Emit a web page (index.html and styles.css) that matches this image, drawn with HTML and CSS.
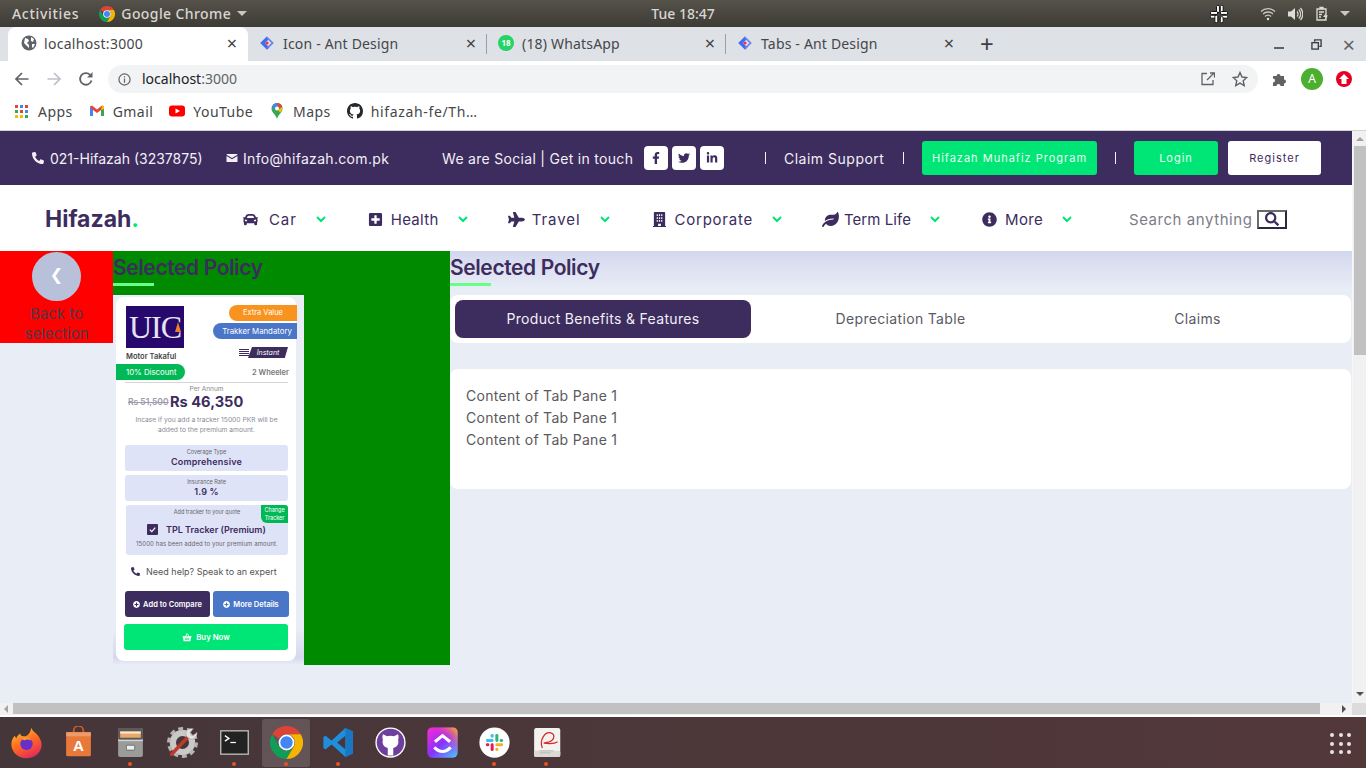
FILE: index.html
```html
<!DOCTYPE html>
<html lang="en">
  <head>
    <meta charset="UTF-8" />
    <meta name="viewport" content="width=device-width, initial-scale=1.0" />
    <title>Hifazah</title>
    <link rel="stylesheet" href="styles.css">
  </head>
  <body>
    <svg class="defs" aria-hidden="true">
      <symbol id="i-phone" viewBox="0 0 512 512"><path transform="matrix(-1 0 0 1 512 0)" d="M493.4 24.6l-104-24c-11.3-2.6-22.9 3.3-27.5 13.9l-48 112c-4.2 9.8-1.4 21.3 6.9 28l60.6 49.6c-36 76.7-98.9 140.5-177.2 177.2l-49.6-60.6c-6.8-8.3-18.2-11.1-28-6.9l-112 48C3.9 366.5-2 378.1.6 389.4l24 104C27.1 504.2 36.7 512 48 512c256.1 0 464-207.5 464-464 0-11.2-7.7-20.9-18.6-23.4z"/></symbol>
      <symbol id="i-mail" viewBox="0 0 24 24"><path d="M2 4h20a1 1 0 0 1 1 1v.6l-11 6.6L1 5.600V5a1 1 0 0 1 1-1zM1 8l11 6.600L23 8v11a1 1 0 0 1-1 1H2a1 1 0 0 1-1-1z"/></symbol>
      <symbol id="i-fb" viewBox="0 0 320 512"><path d="M279.14 288l14.22-92.66h-88.91v-60.13c0-25.35 12.42-50.06 52.24-50.06h40.42V6.26S260.43 0 225.36 0c-73.22 0-121.08 44.38-121.08 124.72v70.62H22.89V288h81.39v224h100.17V288z"/></symbol>
      <symbol id="i-tw" viewBox="0 0 512 512"><path d="M459.37 151.716c.325 4.548.325 9.097.325 13.645 0 138.72-105.583 298.558-298.558 298.558-59.452 0-114.68-17.219-161.137-47.106 8.447.974 16.568 1.299 25.34 1.299 49.055 0 94.213-16.568 130.274-44.832-46.132-.975-84.792-31.188-98.112-72.772 6.498.974 12.995 1.624 19.818 1.624 9.421 0 18.843-1.3 27.614-3.573-48.081-9.747-84.143-51.98-84.143-102.985v-1.299c13.969 7.797 30.214 12.67 47.431 13.319-28.264-18.843-46.781-51.005-46.781-87.391 0-19.492 5.197-37.36 14.294-52.954 51.655 63.675 129.3 105.258 216.365 109.807-1.624-7.797-2.599-15.918-2.599-24.04 0-57.828 46.782-104.934 104.934-104.934 30.213 0 57.502 12.67 76.67 33.137 23.715-4.548 46.456-13.32 66.599-25.34-7.798 24.366-24.366 44.833-46.132 57.827 21.117-2.273 41.584-8.122 60.426-16.243-14.292 20.791-32.161 39.308-52.628 54.253z"/></symbol>
      <symbol id="i-in" viewBox="0 0 448 512"><path d="M100.28 448H7.4V148.9h92.88zM53.79 108.1C24.09 108.1 0 83.5 0 53.8a53.79 53.79 0 0 1 107.58 0c0 29.7-24.1 54.3-53.79 54.3zM447.9 448h-92.68V302.4c0-34.7-.7-79.2-48.29-79.2-48.29 0-55.69 37.7-55.69 76.7V448h-92.78V148.9h89.08v40.8h1.3c12.4-23.5 42.69-48.3 87.88-48.3 94 0 111.28 61.9 111.28 142.3V448z"/></symbol>
      <symbol id="i-search" viewBox="0 0 512 512"><path d="M505 442.7L405.3 343c-4.5-4.5-10.6-7-17-7H372c27.6-35.3 44-79.7 44-128C416 93.1 322.9 0 208 0S0 93.1 0 208s93.1 208 208 208c48.3 0 92.7-16.4 128-44v16.3c0 6.4 2.5 12.5 7 17l99.7 99.7c9.4 9.4 24.6 9.4 33.9 0l28.3-28.3c9.4-9.400 9.400-24.6.1-34zM208 336c-70.7 0-128-57.2-128-128 0-70.7 57.2-128 128-128 70.7 0 128 57.2 128 128 0 70.7-57.2 128-128 128z"/></symbol>
      <symbol id="i-car" viewBox="0 0 512 512"><path d="M499.99 176h-59.87l-16.64-41.6C406.38 91.63 365.57 64 319.5 64h-127c-46.06 0-86.88 27.63-103.99 70.4L71.87 176H12.01C4.2 176-1.53 183.34.37 190.91l6 24C7.7 220.25 12.5 224 18.01 224h20.07C24.65 235.73 16 252.78 16 272v48c0 16.12 6.16 30.67 16 41.93V416c0 17.67 14.33 32 32 32h32c17.67 0 32-14.33 32-32v-32h256v32c0 17.67 14.33 32 32 32h32c17.67 0 32-14.33 32-32v-54.07c9.84-11.25 16-25.8 16-41.93v-48c0-19.22-8.65-36.27-22.07-48H494c5.51 0 10.31-3.75 11.64-9.09l6-24c1.89-7.57-3.84-14.91-11.65-14.91zm-352.06-17.83c7.29-18.22 24.94-30.17 44.57-30.17h127c19.63 0 37.28 11.95 44.57 30.17L384 208H128l19.93-49.83zM96 319.8c-19.2 0-32-12.76-32-31.9S76.8 256 96 256s48 28.71 48 47.85-28.8 15.95-48 15.95zm320 0c-19.2 0-48 3.19-48-15.95S396.8 256 416 256s32 12.76 32 31.9-12.8 31.9-32 31.9z"/></symbol>
      <symbol id="i-health" viewBox="0 0 448 512"><path d="M400 32H48C21.5 32 0 53.5 0 80v352c0 26.5 21.5 48 48 48h352c26.5 0 48-21.5 48-48V80c0-26.5-21.5-48-48-48zm-32 252c0 6.6-5.4 12-12 12h-92v92c0 6.6-5.4 12-12 12h-56c-6.6 0-12-5.4-12-12v-92H92c-6.6 0-12-5.4-12-12v-56c0-6.6 5.4-12 12-12h92v-92c0-6.6 5.4-12 12-12h56c6.6 0 12 5.4 12 12v92h92c6.6 0 12 5.4 12 12v56z"/></symbol>
      <symbol id="i-plane" viewBox="0 0 576 512"><path d="M480 192H365.71L260.61 8.06A16.014 16.014 0 0 0 246.71 0h-65.5c-10.63 0-18.3 10.17-15.38 20.39L214.86 192H112l-43.2-57.6c-3.02-4.03-7.77-6.4-12.8-6.4H16.01C5.6 128-2.04 137.78.49 147.88L32 256 .49 364.12C-2.04 374.22 5.6 384 16.01 384H56c5.04 0 9.78-2.37 12.8-6.4L112 320h102.86l-49.03 171.6c-2.92 10.22 4.75 20.4 15.38 20.4h65.5c5.74 0 11.04-3.08 13.89-8.06L365.71 320H480c35.35 0 96-28.65 96-64s-60.65-64-96-64z"/></symbol>
      <symbol id="i-building" viewBox="0 0 448 512"><path fill-rule="evenodd" d="M436 480h-20V24c0-13.300-10.700-24-24-24H56C42.700 0 32 10.700 32 24v456H12c-6.600 0-12 5.400-12 12v20h448v-20c0-6.600-5.400-12-12-12zM128 76h40v60h-40zm0 100h40v60h-40zm0 100h40v60h-40zm152-200h40v60h-40zm0 100h40v60h-40zm0 100h40v60h-40zm-76-200h40v60h-40zm0 100h40v60h-40zm0 100h40v60h-40zM176 400h96v80h-96z"/></symbol>
      <symbol id="i-leaf" viewBox="0 0 576 512"><path d="M546.2 9.7c-5.6-12.5-21.6-13-28.3-1.2C486.9 62.4 431.4 96 368 96h-80C182 96 96 182 96 288c0 7 .8 13.7 1.5 20.5C161.3 262.8 253.4 224 384 224c8.8 0 16 7.2 16 16s-7.2 16-16 16C132.6 256 26 410.1 2.4 468c-6.6 16.3 1.2 34.9 17.5 41.6 16.4 6.8 35-1.1 41.800-17.3 1.5-3.6 20.9-47.9 71.9-90.6 32.4 43.9 94 85.8 174.9 77.2C465.5 467.500 576 326.700 576 154.300c0-50.200-10.800-102.200-29.800-144.600z"/></symbol>
      <symbol id="i-info" viewBox="0 0 512 512"><path d="M256 8C119.043 8 8 119.083 8 256c0 136.997 111.043 248 248 248s248-111.003 248-248C504 119.083 392.957 8 256 8zm0 110c23.196 0 42 18.804 42 42s-18.804 42-42 42-42-18.804-42-42 18.804-42 42-42zm56 254c0 6.627-5.373 12-12 12h-88c-6.627 0-12-5.373-12-12v-24c0-6.627 5.373-12 12-12h12v-64h-12c-6.627 0-12-5.373-12-12v-24c0-6.627 5.373-12 12-12h64c6.627 0 12 5.373 12 12v100h12c6.627 0 12 5.373 12 12v24z"/></symbol>
      <symbol id="i-plus" viewBox="0 0 512 512"><path d="M256 8C119 8 8 119 8 256s111 248 248 248 248-111 248-248S393 8 256 8zm144 276c0 6.6-5.4 12-12 12h-92v92c0 6.6-5.4 12-12 12h-56c-6.6 0-12-5.4-12-12v-92h-92c-6.6 0-12-5.4-12-12v-56c0-6.6 5.4-12 12-12h92v-92c0-6.6 5.4-12 12-12h56c6.6 0 12 5.400 12 12v92h92c6.600 0 12 5.400 12 12v56z"/></symbol>
      <symbol id="i-basket" viewBox="0 0 24 24"><path d="M7.500 10L11 3.500l1.700.9L9.800 10h5.400l-2.900-5.600 1.700-.9 3.500 6.500H23v2.500h-1.200L20 22H4L2.200 12.500H1V10zM8 14v5h2v-5zm3 0v5h2v-5zm3 0v5h2v-5z"/></symbol>
      <symbol id="i-chev" viewBox="0 0 10 7"><path d="M1 1l4 4 4-4" fill="none" stroke="currentColor" stroke-width="2"/></symbol>
      <symbol id="i-chrome" viewBox="0 0 48 48">
        <path fill="#db4437" d="M3.200 12A24 24 0 0 1 44.800 12H24a12 12 0 0 0-10.400 6z"/>
        <path fill="#0f9d58" d="M3.200 12A24 24 0 0 0 24 48L34.400 30A12 12 0 0 1 13.600 30z"/>
        <path fill="#f4b400" d="M44.800 12H24A12 12 0 0 1 34.400 30L24 48A24 24 0 0 0 44.800 12z"/>
        <circle cx="24" cy="24" r="11.500" fill="#fff"/>
        <circle cx="24" cy="24" r="9" fill="#4285f4"/>
      </symbol>
      <symbol id="i-ant" viewBox="0 0 20 20">
        <path d="M10 1.500L1.500 10l8.500 8.500 3-3-5.500-5.500L10 7.500l1.600-1.600z" fill="#3f6ff0"/>
        <path d="M11 2.500l7.500 7.500-7.500 7.500-1.500-1.500L15.500 10 9.500 4z" fill="#6e7ff5"/>
        <circle cx="10" cy="10" r="2" fill="#f5333f"/>
      </symbol>
      <symbol id="i-github" viewBox="0 0 16 16"><path d="M8 0C3.580 0 0 3.580 0 8c0 3.540 2.290 6.530 5.470 7.590.4.070.55-.17.55-.38 0-.19-.01-.82-.01-1.490-2.010.37-2.530-.49-2.690-.94-.09-.23-.48-.94-.82-1.130-.28-.15-.68-.52-.01-.53.63-.01 1.080.58 1.230.82.720 1.210 1.870.87 2.330.66.070-.52.280-.87.510-1.070-1.780-.2-3.640-.89-3.640-3.950 0-.87.310-1.590.820-2.150-.08-.2-.36-1.020.08-2.120 0 0 .67-.21 2.200.82.640-.18 1.320-.27 2-.27.680 0 1.360.09 2 .27 1.530-1.040 2.200-.82 2.200-.82.440 1.100.160 1.920.080 2.120.510.560.820 1.270.820 2.150 0 3.070-1.870 3.750-3.650 3.950.290.250.540.730.540 1.480 0 1.070-.01 1.930-.01 2.200 0 .21.150.46.550.38A8.013 8.013 0 0 0 16 8c0-4.420-3.580-8-8-8z"/></symbol>
      <symbol id="i-slack" viewBox="0 0 24 24">
        <g fill="#36c5f0"><rect x="2" y="8" width="9" height="3.500" rx="1.700"/><rect x="7.500" y="2" width="3.500" height="4.500" rx="1.700"/></g>
        <g fill="#2eb67d"><rect x="13" y="2" width="3.500" height="9.500" rx="1.700"/><rect x="18" y="8" width="4" height="3.500" rx="1.700"/></g>
        <g fill="#ecb22e"><rect x="13" y="13" width="9" height="3.500" rx="1.700"/><rect x="13" y="18" width="3.500" height="4" rx="1.700"/></g>
        <g fill="#e01e5a"><rect x="7.500" y="13" width="3.500" height="9" rx="1.700"/><rect x="2" y="13" width="4" height="3.500" rx="1.700"/></g>
      </symbol>
    </svg>

    <div class="panel">
      <div class="panel-left">
        <span class="panel-activities">Activities</span>
        <svg class="panel-chrome"><use href="#i-chrome"/></svg>
        <span class="panel-app">Google Chrome</span>
        <span class="panel-caret"></span>
      </div>
      <div class="panel-clock">Tue 18:47</div>
      <div class="panel-right">
        <svg class="panel-slack" viewBox="0 0 24 24" fill="#fff" stroke="#111" stroke-width="1.200">
          <rect x="9" y="1.500" width="3.500" height="9" rx="1.700"/><rect x="1.500" y="9" width="9" height="3.500" rx="1.700"/>
          <rect x="13.500" y="1.500" width="3.500" height="9" rx="1.700"/><rect x="13.500" y="9" width="9" height="3.500" rx="1.700"/>
          <rect x="1.500" y="13.500" width="9" height="3.500" rx="1.700"/><rect x="7" y="13.500" width="3.500" height="9" rx="1.700"/>
          <rect x="13.500" y="13.500" width="9" height="3.500" rx="1.700"/><rect x="13.500" y="15" width="3.500" height="7.500" rx="1.700"/>
        </svg>
        <svg class="panel-icon" viewBox="0 0 16 16" fill="none" stroke="#c9c7c1" stroke-width="1.300">
          <path d="M1 5.500a10 10 0 0 1 14 0M3 8a7.200 7.200 0 0 1 10 0M5 10.500a4 4 0 0 1 6 0"/><circle cx="8" cy="13" r="1.200" fill="#e6e4de" stroke="none"/>
        </svg>
        <svg class="panel-icon" viewBox="0 0 16 16" fill="none" stroke="#dedcd6" stroke-width="1.200">
          <path d="M1 5.500h3L8 2v12L4 10.500H1z" fill="#dedcd6" stroke="none"/><path d="M10 5.500a3.500 3.500 0 0 1 0 5M11.800 3.500a6.500 6.500 0 0 1 0 9M13.500 2a9 9 0 0 1 0 12"/>
        </svg>
        <svg class="panel-icon" viewBox="0 0 16 16" fill="none" stroke="#dedcd6" stroke-width="1.300">
          <path d="M3 3h9v11H3zM6 3V1.500h3V3M5 6h5M5 8.500h3M5 11h2"/><path d="M12 7l-3 4h2.500l-1 3.500 3.500-5h-2.500z" fill="#dedcd6" stroke="none"/>
        </svg>
        <span class="panel-caret panel-caret-end"></span>
      </div>
    </div>

    <div class="tabstrip">
      <div class="tab tab-active">
        <svg class="tab-icon" viewBox="0 0 16 16"><circle cx="8" cy="8" r="7.500" fill="#5f6368"/><path d="M4 3l3 1 1 2-2 2 2 2v3L6 11 3 8zM10 2l3 2-1 3-2-1zM11 9l3 0-2 4-1-1z" fill="#fff"/></svg>
        <span class="tab-title">localhost:3000</span>
        <span class="tab-close">×</span>
      </div>
      <div class="tab">
        <svg class="tab-icon"><use href="#i-ant"/></svg>
        <span class="tab-title">Icon - Ant Design</span>
        <span class="tab-close">×</span>
      </div>
      <div class="tab tab-sep">
        <span class="tab-wa">18</span>
        <span class="tab-title">(18) WhatsApp</span>
        <span class="tab-close">×</span>
      </div>
      <div class="tab tab-sep">
        <svg class="tab-icon"><use href="#i-ant"/></svg>
        <span class="tab-title">Tabs - Ant Design</span>
        <span class="tab-close">×</span>
      </div>
      <span class="tab-new">+</span>
      <div class="win-controls">
        <span class="win-min"></span>
        <svg class="win-restore" viewBox="0 0 12 12" fill="none" stroke="#3c4043" stroke-width="1.500"><rect x="1" y="4" width="7" height="7" fill="#dee1e6"/><path d="M4 3V1h7v7H9"/></svg>
        <span class="win-close">×</span>
      </div>
    </div>

    <div class="toolbar">
      <svg class="tool-btn" viewBox="0 0 16 16" fill="none" stroke="#5f6368" stroke-width="1.700"><path d="M14.500 8H2M8 2L2 8l6 6"/></svg>
      <svg class="tool-btn" viewBox="0 0 16 16" fill="none" stroke="#bdc1c6" stroke-width="1.700"><path d="M1.500 8H14M8 2l6 6-6 6"/></svg>
      <svg class="tool-btn" viewBox="0 0 16 16" fill="none" stroke="#5f6368" stroke-width="1.800"><path d="M13.500 9.500A5.800 5.800 0 1 1 12 3.800"/><path d="M14.500 1v5.500H9z" fill="#5f6368" stroke="none"/></svg>
      <div class="omnibox">
        <svg class="omni-info" viewBox="0 0 14 14" fill="none" stroke="#5f6368" stroke-width="1.300"><circle cx="7" cy="7" r="6"/><path d="M7 6v4.500M7 3.500v1.300"/></svg>
        <span class="omni-url">localhost<span class="omni-port">:3000</span></span>
        <svg class="omni-share" viewBox="0 0 14 14" fill="none" stroke="#5f6368" stroke-width="1.300"><path d="M6 1.500H1v11h11V8M6 8l7-7M9 1h4.500v4.500"/></svg>
        <svg class="omni-star" viewBox="0 0 16 16" fill="none" stroke="#5f6368" stroke-width="1.400"><path d="M8 1.500l2 4.500 4.800.5-3.600 3.200 1 4.800L8 12.100l-4.200 2.400 1-4.800L1.200 6.500 6 6z"/></svg>
      </div>
      <svg class="ext-puzzle" viewBox="0 0 16 16" fill="#5f6368"><path d="M1 5h3.500a2 2 0 1 1 4 0H12v3.500a2 2 0 1 1 0 4V15H8.500a2 2 0 1 0-4 0H1v-3.500a2 2 0 1 0 0-4z"/></svg>
      <span class="avatar">A</span>
      <span class="ext-update"></span>
    </div>

    <div class="bookmarks">
      <span class="bm bm-apps"><span class="apps-grid"><i></i><i></i><i></i><i></i><i></i><i></i><i></i><i></i><i></i></span>Apps</span>
      <span class="bm">
        <svg class="bm-icon" viewBox="0 0 16 16"><path d="M1 3.500V13h3V7l4 3 4-3v6h3V3.500L13 2.500 8 6.500 3 2.500z" fill="#ea4335"/><path d="M1 3.500V13h3V7z" fill="#4285f4"/><path d="M12 7v6h3V3.500z" fill="#34a853"/><path d="M13 2.500l2 1V6l-3 1z" fill="#fbbc04"/></svg>
        Gmail
      </span>
      <span class="bm">
        <svg class="bm-icon" viewBox="0 0 16 16"><rect y="2.500" width="16" height="11" rx="3" fill="#f00"/><path d="M6.500 5.500L11 8l-4.500 2.500z" fill="#fff"/></svg>
        YouTube
      </span>
      <span class="bm">
        <svg class="bm-icon" viewBox="0 0 16 16"><path d="M8 0a5.500 5.500 0 0 1 5.500 5.500C13.500 9.500 9.500 11 8 16 6.500 11 2.500 9.500 2.500 5.500A5.500 5.500 0 0 1 8 0z" fill="#34a853"/><path d="M4 1.800A5.500 5.500 0 0 1 8 0l2 3-6 4z" fill="#4285f4"/><path d="M8 0a5.500 5.500 0 0 1 5.300 4L9 5z" fill="#ea4335"/><path d="M13.300 4a5.500 5.500 0 0 1-2.300 5.500L9 7z" fill="#fbbc04"/><circle cx="8" cy="5.500" r="2" fill="#fff"/></svg>
        Maps
      </span>
      <span class="bm bm-repo">
        <svg class="bm-icon"><use href="#i-github"/></svg>
        hifazah-fe/Th…
      </span>
    </div>

    <div class="viewport">
      <div class="viewport-main">
        <div class="page">
          <header class="site-top">
            <span class="top-phone"><svg class="top-icon"><use href="#i-phone"/></svg>021-Hifazah (3237875)</span>
            <span class="top-mail"><svg class="top-icon"><use href="#i-mail"/></svg>Info@hifazah.com.pk</span>
            <span class="top-social">We are Social | Get in touch</span>
            <a class="social-btn"><svg><use href="#i-fb"/></svg></a>
            <a class="social-btn"><svg><use href="#i-tw"/></svg></a>
            <a class="social-btn"><svg><use href="#i-in"/></svg></a>
            <span class="top-sep top-sep-first"></span>
            <span class="top-claim">Claim Support</span>
            <span class="top-sep"></span>
            <a class="top-btn top-btn-program">Hifazah Muhafiz Program</a>
            <span class="top-sep"></span>
            <a class="top-btn top-btn-login">Login</a>
            <a class="top-btn top-btn-register">Register</a>
          </header>

          <nav class="site-nav">
            <div class="logo">Hifazah<span class="logo-dot">.</span></div>
            <div class="nav-items">
              <a class="nav-item nav-car"><svg class="nav-icon"><use href="#i-car"/></svg><span>Car</span><svg class="nav-chev"><use href="#i-chev"/></svg></a>
              <a class="nav-item"><svg class="nav-icon"><use href="#i-health"/></svg><span>Health</span><svg class="nav-chev"><use href="#i-chev"/></svg></a>
              <a class="nav-item nav-travel"><svg class="nav-icon nav-icon-wide"><use href="#i-plane"/></svg><span>Travel</span><svg class="nav-chev"><use href="#i-chev"/></svg></a>
              <a class="nav-item nav-corporate"><svg class="nav-icon"><use href="#i-building"/></svg><span>Corporate</span><svg class="nav-chev"><use href="#i-chev"/></svg></a>
              <a class="nav-item nav-term"><svg class="nav-icon nav-icon-wide"><use href="#i-leaf"/></svg><span>Term Life</span><svg class="nav-chev"><use href="#i-chev"/></svg></a>
              <a class="nav-item"><svg class="nav-icon"><use href="#i-info"/></svg><span>More</span><svg class="nav-chev"><use href="#i-chev"/></svg></a>
            </div>
            <div class="search">
              <span class="search-text">Search anything</span>
              <span class="search-btn"><svg><use href="#i-search"/></svg></span>
            </div>
          </nav>

          <main class="content">
            <div class="back">
              <span class="back-circle">❮</span>
              <span class="back-label">Back to selection</span>
            </div>

            <section class="selected">
              <h2 class="section-title">Selected Policy</h2>
              <div class="card-wrap">
                <div class="card">
                  <div class="card-top">
                    <div class="insurer">
                      <div class="uic-logo">UIC<i class="uic-flag"></i></div>
                      <div class="insurer-name">Motor Takaful</div>
                    </div>
                    <div class="card-tags">
                      <span class="tag tag-orange">Extra Value</span>
                      <span class="tag tag-blue">Trakker Mandatory</span>
                      <span class="instant"><i class="instant-lines"></i><em>Instant</em></span>
                    </div>
                  </div>
                  <div class="discount-row">
                    <span class="discount">10% Discount</span>
                    <span class="wheeler">2 Wheeler</span>
                  </div>
                  <div class="price-box">
                    <div class="per-annum">Per Annum</div>
                    <div class="price"><s>Rs 51,500</s><strong>Rs 46,350</strong></div>
                    <p class="price-note">Incase if you add a tracker 15000 PKR will be added to the premium amount.</p>
                  </div>
                  <div class="info-box">
                    <small>Coverage Type</small>
                    <b>Comprehensive</b>
                  </div>
                  <div class="info-box">
                    <small>Insurance Rate</small>
                    <b>1.9 %</b>
                  </div>
                  <div class="tracker-box">
                    <span class="change-tracker">Change Tracker</span>
                    <small>Add tracker to your quote</small>
                    <div class="tracker-row">
                      <span class="check"><svg viewBox="0 0 12 12" fill="none" stroke="#fff" stroke-width="1.300"><path d="M3 6.200l2.200 2.200L9 4"/></svg></span>
                      <b>TPL Tracker (Premium)</b>
                    </div>
                    <small class="tracker-note">15000 has been added to your premium amount.</small>
                  </div>
                  <div class="help"><svg><use href="#i-phone"/></svg>Need help? Speak to an expert</div>
                  <div class="card-actions">
                    <a class="action action-compare"><svg><use href="#i-plus"/></svg>Add to Compare</a>
                    <a class="action action-details"><svg><use href="#i-plus"/></svg>More Details</a>
                  </div>
                  <a class="buy"><svg><use href="#i-basket"/></svg>Buy Now</a>
                </div>
              </div>
            </section>

            <section class="details">
              <h2 class="section-title">Selected Policy</h2>
              <div class="tabs">
                <span class="tabs-item tabs-active">Product Benefits &amp; Features</span>
                <span class="tabs-item">Depreciation Table</span>
                <span class="tabs-item">Claims</span>
              </div>
              <div class="pane">
                <p>Content of Tab Pane 1</p>
                <p>Content of Tab Pane 1</p>
                <p>Content of Tab Pane 1</p>
              </div>
            </section>
          </main>
        </div>
        <div class="vscroll">
          <span class="arrow-up"></span>
          <span class="vscroll-thumb"></span>
          <span class="arrow-down"></span>
        </div>
      </div>
      <div class="hscroll">
        <span class="arrow-left"></span>
        <span class="hscroll-thumb"></span>
        <span class="arrow-right"></span>
        <span class="scroll-corner"></span>
      </div>
    </div>

    <div class="dock">
      <span class="dock-item">
        <svg viewBox="0 0 48 48">
          <defs><linearGradient id="ff" x1="0.200" y1="0" x2="0.700" y2="1"><stop offset="0" stop-color="#ffc233"/><stop offset="0.500" stop-color="#ff6a1f"/><stop offset="1" stop-color="#e3265f"/></linearGradient></defs>
          <path fill="url(#ff)" d="M31 2c1 5 6 7 10 12 4 6 5 10 5 13 0 12-10 20-22 20S2 38 2 27c0-6 2-10 5-13l2 4c1-3 3-5 6-7 0 3 2 4 5 4 6 0 10-6 11-13z"/>
          <circle cx="24" cy="26" r="9" fill="#6b2fc9"/><path d="M17 19c4-4 12-3 14 2-3-2-8-2-10 0z" fill="#ff9a2e"/>
        </svg>
      </span>
      <span class="dock-item">
        <svg viewBox="0 0 48 48">
          <path d="M17 10V7a7 7 0 0 1 14 0v3" fill="none" stroke="#d85a1e" stroke-width="2.500"/>
          <rect x="6" y="9" width="36" height="35" rx="2" fill="#e8793a"/><rect x="6" y="9" width="36" height="6" fill="#f09a66"/>
          <text x="24" y="36" class="dock-a">A</text>
        </svg>
      </span>
      <span class="dock-item">
        <svg viewBox="0 0 48 48">
          <rect x="6" y="3" width="36" height="42" rx="3" fill="#9b9b98"/><rect x="6" y="3" width="36" height="17" rx="3" fill="#5c5a58"/>
          <rect x="9" y="8" width="30" height="9" fill="#e8a96a"/><rect x="9" y="8" width="30" height="3" fill="#fbe9cf"/>
          <rect x="6" y="20" width="36" height="2" fill="#d6d6d3"/>
          <rect x="18" y="28" width="12" height="7" rx="1" fill="#eee" stroke="#555"/>
        </svg>
      </span>
      <span class="dock-item">
        <svg viewBox="0 0 48 48">
          <circle cx="24" cy="24" r="14" fill="none" stroke="#c9c9c7" stroke-width="9"/>
          <circle cx="24" cy="24" r="20" fill="none" stroke="#b5b5b3" stroke-width="5" stroke-dasharray="7 5.500"/>
          <path d="M8 41L32 16" stroke="#c0392b" stroke-width="5" stroke-linecap="round"/>
          <path d="M40 4l-5 5 1 4 4 1 5-5c1 5-3 11-9 10l-3-1-3-3-1-3c-1-6 5-10 11-8z" fill="#e3e3e1" stroke="#888" stroke-width="0.600"/>
        </svg>
      </span>
      <span class="dock-item">
        <svg viewBox="0 0 48 48">
          <rect x="3" y="6" width="42" height="36" fill="#b9b9b5"/><rect x="5" y="8" width="38" height="32" fill="#222"/>
          <path d="M10 14l6 4-6 4" fill="none" stroke="#fff" stroke-width="1.800"/><path d="M18 24h8" stroke="#fff" stroke-width="1.800"/>
        </svg>
      </span>
      <span class="dock-item dock-active">
        <svg class="dock-chrome"><use href="#i-chrome"/></svg>
      </span>
      <span class="dock-item">
        <svg viewBox="0 0 48 48">
          <path d="M34 3l11 5v32l-11 5-20-18-9 7-3-2V16l3-2 9 7zM34 14L22 24l12 10z" fill="#1f8fdc" fill-rule="evenodd"/>
          <path d="M34 3l11 5v32l-11 5z" fill="#1976c2"/>
        </svg>
      </span>
      <span class="dock-item">
        <svg viewBox="0 0 48 48">
          <circle cx="24" cy="24" r="22" fill="#fff"/><circle cx="24" cy="24" r="20" fill="#6e3f9c"/>
          <path d="M13 12l6 3c3-1 7-1 10 0l6-3c1 3 1 6 0 8 2 6-2 11-7 12v11h-8V32c-5-1-9-6-7-12-1-2-1-5 0-8z" fill="#fff"/>
        </svg>
      </span>
      <span class="dock-item">
        <svg viewBox="0 0 48 48">
          <defs><linearGradient id="cu" x1="0" y1="0" x2="1" y2="1"><stop offset="0" stop-color="#ff2bd0"/><stop offset="0.500" stop-color="#8930fd"/><stop offset="1" stop-color="#49ccf9"/></linearGradient><linearGradient id="cu2" x1="0" y1="1" x2="1" y2="0"><stop offset="0.500" stop-color="#ff02f0" stop-opacity="0"/><stop offset="1" stop-color="#ffc800"/></linearGradient></defs>
          <rect x="2" y="2" width="44" height="44" rx="7" fill="url(#cu)"/><rect x="2" y="2" width="44" height="44" rx="7" fill="url(#cu2)"/>
          <path d="M13 23l11-9 11 9" fill="none" stroke="#fff" stroke-width="4.500"/><path d="M12 31c8 8 16 8 24 0" fill="none" stroke="#fff" stroke-width="4.500"/>
        </svg>
      </span>
      <span class="dock-item">
        <svg viewBox="0 0 48 48"><circle cx="24" cy="24" r="22" fill="#fff"/><use href="#i-slack" x="9" y="9" width="30" height="30"/></svg>
      </span>
      <span class="dock-item">
        <svg viewBox="0 0 48 48">
          <rect x="6" y="3" width="38" height="42" rx="3" fill="#f2f2ef"/><rect x="6" y="36" width="38" height="9" rx="2" fill="#d9d9d5"/>
          <path d="M18 32c-5-12 4-24 12-22 7 2 6 10-2 13l-8 2c8 1 16 1 20-2" fill="none" stroke="#d8262c" stroke-width="1.800"/>
          <path d="M14 36h20M14 39h16" stroke="#aaa"/>
        </svg>
      </span>
      <span class="dock-grid"><i></i><i></i><i></i><i></i><i></i><i></i><i></i><i></i><i></i></span>
    </div>
  </body>
</html>
```

FILE: styles.css
```css
/* styles.css */
* {
  box-sizing: border-box;
}

html,
body {
  margin: 0;
  height: 768px;
  overflow: hidden;
}

body {
  width: 1366px;
  display: flex;
  flex-direction: column;
  font-family: "Noto Sans", sans-serif;
  color: #3c4043;
}

p,
h2 {
  margin: 0;
}

svg {
  display: block;
}

svg:not([fill]) {
  fill: currentColor;
}

.defs {
  width: 0;
  height: 0;
  position: absolute;
}

/* gnome panel */
.panel {
  height: 27px;
  flex: none;
  display: grid;
  grid-template-columns: 1fr auto 1fr;
  align-items: center;
  padding: 0 12px;
  background: linear-gradient(#55524a, #3d3b35);
  color: #d8d6d0;
  font-size: 14px;
  font-weight: 500;
}

.panel-left,
.panel-right {
  display: flex;
  align-items: center;
}

.panel-activities {
  margin-right: 20px;
  letter-spacing: 0.7px;
}

.panel-app {
  letter-spacing: 0.4px;
}

.panel-chrome {
  width: 16px;
  height: 16px;
  margin-right: 6px;
}

.panel-caret {
  width: 0;
  height: 0;
  margin-left: 6px;
  border: 5px solid transparent;
  border-top-color: #c9c7c1;
  border-bottom: 0;
}

.panel-right {
  justify-content: flex-end;
}

.panel-slack {
  width: 20px;
  height: 20px;
  margin-right: 31px;
}

.panel-icon {
  width: 16px;
  height: 16px;
  margin-right: 11px;
}

.panel-caret-end {
  margin: 0 4px 0 -1px;
}

/* chrome */
.tabstrip {
  height: 34px;
  flex: none;
  display: flex;
  align-items: flex-end;
  padding-left: 8px;
  background: #dee1e6;
  font-size: 14px;
  letter-spacing: 0.18px;
  color: #45474a;
}

.tab {
  width: 239px;
  height: 34px;
  display: flex;
  align-items: center;
  padding: 0 8px 2px 11px;
  position: relative;
}

.tab-active {
  width: 240px;
  background: #fff;
  border-radius: 8px 8px 0 0;
  padding-left: 13px;
  letter-spacing: 0.3px;
}

.tab-active .tab-icon {
  margin-right: 7px;
}

.tab-sep::before {
  content: "";
  position: absolute;
  left: -1px;
  top: 7px;
  height: 20px;
  width: 1px;
  background: #9aa0a6;
}

.tab-icon {
  width: 16px;
  height: 16px;
  margin-right: 8px;
  flex: none;
}

.tab-wa {
  width: 16px;
  height: 16px;
  margin-right: 8px;
  border-radius: 50%;
  background: #25d366;
  color: #fff;
  font-size: 8px;
  font-weight: 700;
  line-height: 16px;
  text-align: center;
  letter-spacing: 0;
}

.tab-title {
  flex: 1;
  white-space: nowrap;
}

.tab-close {
  width: 16px;
  font-size: 18px;
  line-height: 16px;
  text-align: center;
  color: #3c4043;
}

.tab-new {
  width: 46px;
  height: 34px;
  margin-left: -1px;
  font-size: 24px;
  font-weight: 400;
  line-height: 33px;
  text-align: center;
  color: #3c4043;
}

.win-controls {
  margin-left: auto;
  height: 34px;
  display: flex;
  align-items: center;
  padding-right: 10px;
}

.win-min {
  width: 10px;
  height: 2px;
  margin-top: 8px;
  background: #5f6368;
}

.win-restore {
  width: 11px;
  height: 11px;
  margin-left: 27px;
}

.win-close {
  width: 14px;
  margin-left: 20px;
  font-size: 22px;
  line-height: 20px;
  text-align: center;
  color: #5f6368;
}

.toolbar {
  height: 32px;
  flex: none;
  display: flex;
  align-items: flex-start;
  padding: 10px 0 0 14px;
  background: #fff;
}

.tool-btn {
  width: 16px;
  height: 16px;
  margin-right: 16px;
}

.omnibox {
  width: 1150px;
  height: 28px;
  margin: -6px 0 0 -2px;
  display: flex;
  align-items: center;
  padding: 0 10px 0 10px;
  border-radius: 14px;
  background: #f1f3f4;
  font-size: 14px;
}

.omni-info {
  width: 13px;
  height: 13px;
  margin-right: 11px;
}

.omni-url {
  flex: 1;
  color: #202124;
  padding-bottom: 1px;
}

.omni-port {
  color: #5f6368;
}

.omni-share {
  width: 14px;
  height: 14px;
  margin-right: 17px;
}

.omni-star {
  width: 16px;
  height: 16px;
}

.ext-puzzle {
  width: 16px;
  height: 16px;
  margin: 0 0 0 14px;
}

.avatar {
  width: 22px;
  height: 22px;
  margin: -3px 0 0 13px;
  border-radius: 50%;
  background: #4caf2f;
  color: #fff;
  font-size: 12px;
  line-height: 22px;
  text-align: center;
}

.ext-update {
  width: 16px;
  height: 16px;
  margin: 0 0 0 13px;
  border-radius: 50%;
  background: #e60023;
  position: relative;
}

.ext-update::after {
  content: "";
  position: absolute;
  left: 3px;
  top: 3px;
  width: 10px;
  height: 10px;
  background: #fff;
  clip-path: polygon(50% 0, 100% 50%, 75% 50%, 75% 100%, 25% 100%, 25% 50%, 0 50%);
}

.bookmarks {
  height: 38px;
  flex: none;
  display: flex;
  align-items: center;
  padding: 0 0 1px 15px;
  background: #fff;
  border-bottom: 1px solid #d4d4d4;
  font-size: 14px;
  letter-spacing: 0.45px;
  color: #45474a;
}

.bm {
  display: flex;
  align-items: center;
  margin-right: 16px;
}

.bm-apps {
  margin-right: 16px;
}

.bm-repo {
  letter-spacing: 0.65px;
}

.bm-icon {
  width: 16px;
  height: 16px;
  margin-right: 8px;
  color: #24292e;
}

.apps-grid {
  width: 13px;
  display: grid;
  grid-template-columns: repeat(3, 3px);
  gap: 2px;
  margin-right: 10px;
}

.apps-grid i {
  height: 3px;
  background: #ea4335;
}

.apps-grid i:nth-child(2),
.apps-grid i:nth-child(6) {
  background: #4285f4;
}

.apps-grid i:nth-child(4),
.apps-grid i:nth-child(9) {
  background: #34a853;
}

.apps-grid i:nth-child(7),
.apps-grid i:nth-child(8) {
  background: #fbbc04;
}

/* scrollbars */
.viewport {
  height: 586px;
  flex: none;
  display: flex;
  flex-direction: column;
}

.viewport-main {
  height: 572px;
  flex: none;
  display: flex;
}

.vscroll {
  width: 14px;
  flex: none;
  display: flex;
  flex-direction: column;
  align-items: center;
  background: #f1f1f1;
  border-left: 1px solid #f6f6f6;
}

.vscroll-thumb {
  width: 12px;
  height: 209px;
  margin-top: 5px;
  background: #c1c1c1;
}

.arrow-up,
.arrow-down {
  width: 0;
  height: 0;
  border: 4px solid transparent;
}

.arrow-up {
  margin-top: 6px;
  border-top: 0;
  border-bottom: 4px solid #a3a3a3;
}

.arrow-down {
  margin-top: auto;
  margin-bottom: 7px;
  border-bottom: 0;
  border-top: 4px solid #505050;
}

.hscroll {
  height: 14px;
  flex: none;
  display: flex;
  align-items: center;
  padding-bottom: 1px;
  background: #f1f1f1;
  border-bottom: 2px solid #fff;
}

.hscroll-thumb {
  width: 1307px;
  height: 11px;
  margin-left: 5px;
  background: #c1c1c1;
}

.arrow-left,
.arrow-right {
  width: 0;
  height: 0;
  border: 4px solid transparent;
}

.arrow-left {
  margin-left: 4px;
  border-left: 0;
  border-right: 4px solid #a3a3a3;
}

.arrow-right {
  margin-left: 22px;
  border-right: 0;
  border-left: 4px solid #505050;
}

.scroll-corner {
  width: 14px;
  height: 12px;
  margin-left: auto;
  background: #dcdcdc;
}

/* page */
.page {
  width: 1352px;
  flex: none;
  overflow: hidden;
  font-family: Inter, sans-serif;
  color: #3d2c5e;
  background: #e9edf6;
}

.site-top {
  height: 54px;
  display: flex;
  align-items: center;
  padding-left: 32px;
  background: #3d2c5e;
  color: #f2f0f7;
  font-size: 14px;
}

.top-icon {
  width: 12px;
  height: 12px;
  margin-right: 6px;
  flex: none;
}

.top-mail .top-icon {
  margin-right: 5px;
}

.top-phone,
.top-mail {
  display: flex;
  align-items: center;
  white-space: nowrap;
}

.top-phone {
  width: 194px;
}

.top-mail {
  width: 216px;
  letter-spacing: 0.32px;
}

.top-social {
  width: 202px;
  white-space: nowrap;
  letter-spacing: 0.3px;
}

.social-btn {
  width: 24px;
  height: 24px;
  margin-right: 4px;
  display: flex;
  align-items: center;
  justify-content: center;
  border-radius: 4px;
  background: #fff;
  color: #3d2c5e;
}

.social-btn svg {
  width: 12px;
  height: 12px;
}

.top-sep {
  width: 1px;
  height: 12px;
  margin: 0 18px;
  background: #f2f0f7;
}

.top-sep-first {
  margin-left: 37px;
}

.top-claim {
  width: 101px;
  white-space: nowrap;
  letter-spacing: 0.5px;
}

.top-btn {
  height: 34px;
  display: flex;
  align-items: center;
  justify-content: center;
  border-radius: 3px;
  background: #00e676;
  color: #e8fff2;
  font-size: 11px;
  letter-spacing: 1px;
  white-space: nowrap;
}

.top-btn-program {
  width: 175px;
}

.top-btn-login {
  width: 84px;
}

.top-btn-register {
  width: 93px;
  margin-left: 10px;
  background: #fff;
  color: #3d2c5e;
}

.site-nav {
  height: 66px;
  display: flex;
  align-items: center;
  padding: 2px 0 0 45px;
  background: #fff;
  font-size: 15px;
  letter-spacing: 0.3px;
}

.logo {
  width: 198px;
  font-size: 23px;
  font-weight: 700;
  letter-spacing: 0;
  margin-top: -1px;
}

.logo-dot {
  color: #00e676;
}

.nav-items {
  display: flex;
  gap: 42px;
}

.nav-item {
  display: flex;
  align-items: center;
  white-space: nowrap;
}

.nav-icon {
  width: 15px;
  height: 15px;
  margin-right: 8px;
  flex: none;
}

.nav-icon-wide {
  width: 17px;
}

.nav-car {
  letter-spacing: 0.9px;
}

.nav-car .nav-icon {
  margin-right: 11px;
}

.nav-travel {
  margin-left: -2px;
  letter-spacing: 0.95px;
}

.nav-travel .nav-icon {
  margin-right: 7px;
}

.nav-corporate {
  letter-spacing: 0.75px;
}

.nav-term {
  margin-left: -2px;
  letter-spacing: 0.08px;
}

.nav-term .nav-icon {
  margin-right: 5px;
}

.nav-chev {
  width: 10px;
  height: 7px;
  margin-left: 19px;
  color: #00e676;
  flex: none;
}

.search {
  display: flex;
  align-items: center;
  margin-left: 57px;
}

.search-text {
  width: 128px;
  color: #7d7d8a;
  white-space: nowrap;
  letter-spacing: 0.55px;
}

.search-btn {
  width: 30px;
  height: 19px;
  display: flex;
  align-items: center;
  justify-content: center;
  border: 2px solid #2d2740;
  border-top-color: #6a6a6a;
  border-left-color: #6a6a6a;
  background: #fff;
}

.search-btn svg {
  width: 14px;
  height: 14px;
}

.content {
  height: 452px;
  display: flex;
  align-items: flex-start;
  background: linear-gradient(#d3d7ee, #e9edf6 38px);
}

.back {
  width: 113px;
  height: 92px;
  flex: none;
  display: flex;
  flex-direction: column;
  align-items: center;
  padding-top: 1px;
  background: #f00;
  color: #4d3a48;
  font-size: 15px;
  line-height: 20px;
  text-align: center;
}

.back-circle {
  width: 49px;
  height: 49px;
  margin-bottom: 3px;
  border-radius: 50%;
  background: #b8c1d9;
  color: #fff;
  font-family: "DejaVu Sans", sans-serif;
  font-size: 16px;
  line-height: 46px;
  flex: none;
}

.section-title {
  height: 44px;
  padding-top: 4px;
  font-size: 21px;
  font-weight: 600;
  line-height: 26px;
  letter-spacing: -0.4px;
  position: relative;
}

.section-title::after {
  content: "";
  position: absolute;
  left: 0;
  top: 32px;
  width: 41px;
  height: 3px;
  background: #66ff88;
}

.selected {
  width: 337px;
  height: 414px;
  flex: none;
  background: #008a00;
}

.card-wrap {
  width: 191px;
  height: 370px;
  padding: 2px 8px 0 3px;
  background: linear-gradient(#e9edf6 90%, #d5d9ec 98%, #e9edf6);
}

.card {
  height: 364px;
  padding: 9px 0 0;
  border-radius: 8px;
  background: #fff;
  position: relative;
}

.card-top {
  height: 58px;
  display: flex;
  justify-content: space-between;
  padding-left: 10px;
}

.uic-logo {
  width: 58px;
  height: 42px;
  background: #27096e;
  color: #e6e4f2;
  font-family: "Liberation Serif", serif;
  font-size: 32px;
  line-height: 42px;
  text-align: center;
  letter-spacing: -1px;
  position: relative;
}

.uic-flag {
  position: absolute;
  right: 3px;
  top: 16px;
  border: 3px solid transparent;
  border-bottom: 10px solid #e8812a;
  border-top: 0;
}

.insurer-name {
  margin-top: 4px;
  font-size: 7.500px;
  font-weight: 600;
  line-height: 9px;
  color: #444;
}

.card-tags {
  width: 84px;
  display: flex;
  flex-direction: column;
  align-items: flex-end;
  margin-top: -1px;
  margin-right: -1px;
}

.tag {
  height: 16px;
  margin-bottom: 2px;
  border-radius: 8px 0 0 8px;
  color: #fff;
  font-size: 7.500px;
  line-height: 16px;
  text-align: center;
}

.tag-orange {
  width: 68px;
  background: #f7931e;
}

.tag-blue {
  width: 84px;
  background: #4a76c7;
  font-size: 7.800px;
  padding-left: 4px;
  white-space: nowrap;
}

.instant {
  display: flex;
  align-items: center;
  margin: 6px 9px 0 0;
  height: 11px;
}

.instant-lines {
  width: 10px;
  height: 7px;
  margin-right: -1px;
  background: repeating-linear-gradient(#3d2c5e 0 1px, transparent 1px 2px);
}

.instant em {
  width: 40px;
  height: 11px;
  background: #3d2c5e;
  color: #fff;
  font-size: 7px;
  line-height: 11px;
  text-align: center;
  clip-path: polygon(10% 0, 100% 0, 92% 100%, 0 100%);
}

.discount-row {
  height: 16px;
  display: flex;
  align-items: center;
  justify-content: space-between;
  padding-right: 7px;
}

.discount {
  width: 69px;
  height: 16px;
  padding-left: 10px;
  border-radius: 0 8px 8px 0;
  background: #00b956;
  color: #fff;
  font-size: 7.800px;
  line-height: 16px;
  white-space: nowrap;
}

.wheeler {
  font-size: 7.500px;
  font-weight: 600;
  color: #777;
}

.price-box {
  margin: 2px 8px 0 9px;
  padding-top: 2px;
  border-top: 1px solid #d6d6d6;
  text-align: center;
}

.per-annum {
  font-size: 6.500px;
  line-height: 8px;
  color: #888;
}

.price {
  display: flex;
  align-items: center;
  justify-content: flex-start;
  padding-left: 3px;
  height: 17px;
}

.price s {
  width: 42px;
  font-size: 8.500px;
  font-weight: 600;
  color: #9b9bac;
  white-space: nowrap;
  text-align: left;
}

.price strong {
  font-size: 14.600px;
  font-weight: 700;
  white-space: nowrap;
}

.price-note {
  margin-top: 5px;
  padding: 0 5px;
  font-size: 6.700px;
  line-height: 10px;
  color: #8a8a95;
}

.info-box {
  height: 26px;
  margin: 4px 8px 0 9px;
  padding-top: 3px;
  border-radius: 3px;
  background: #dfe3f8;
  text-align: center;
}

.price-box + .info-box {
  margin-top: 10px;
}

.info-box small,
.tracker-box small {
  display: block;
  font-size: 5.500px;
  line-height: 8px;
  color: #666;
}

.info-box b {
  display: block;
  font-size: 9px;
  font-weight: 600;
  line-height: 12px;
  letter-spacing: 0.2px;
}

.tracker-box {
  height: 50px;
  margin: 4px 8px 0 10px;
  padding-top: 3px;
  border-radius: 3px;
  background: #dfe3f8;
  text-align: center;
  position: relative;
}

.tracker-box .tracker-note {
  font-size: 6px;
  white-space: nowrap;
  letter-spacing: 0.1px;
}

.change-tracker {
  position: absolute;
  right: 0;
  top: 0;
  width: 27px;
  height: 18px;
  padding-top: 1px;
  border-radius: 0 3px 0 6px;
  background: #00b956;
  color: #fff;
  font-size: 5.500px;
  line-height: 8px;
}

.tracker-row {
  height: 22px;
  display: flex;
  align-items: center;
  padding-left: 21px;
  margin-top: 2px;
}

.check {
  width: 11px;
  height: 11px;
  margin-right: 8px;
  border-radius: 1px;
  background: #3d2c5e;
}

.tracker-row b {
  font-size: 9px;
  font-weight: 600;
  white-space: nowrap;
}

.help {
  height: 16px;
  margin-top: 8px;
  display: flex;
  align-items: center;
  padding-left: 15px;
  font-size: 9px;
  color: #555;
}

.help svg {
  width: 9px;
  height: 9px;
  margin-right: 6px;
  color: #3d2c5e;
}

.card-actions {
  margin-top: 12px;
  display: flex;
  gap: 3px;
  padding-left: 9px;
}

.action {
  height: 26px;
  display: flex;
  align-items: center;
  justify-content: center;
  border-radius: 3px;
  color: #fff;
  font-size: 7.500px;
  font-weight: 600;
  white-space: nowrap;
}

.action svg {
  width: 7px;
  height: 7px;
  margin-right: 3px;
}

.action-compare {
  width: 85px;
  background: #3d2c5e;
}

.action-details {
  width: 76px;
  background: #4a76c7;
}

.buy {
  width: 164px;
  height: 26px;
  margin: 7px 0 0 8px;
  display: flex;
  align-items: center;
  justify-content: center;
  border-radius: 3px;
  background: #00e676;
  color: #fff;
  font-size: 7.800px;
  font-weight: 600;
}

.buy svg {
  width: 10px;
  height: 10px;
  margin-right: 4px;
}

.details {
  width: 901px;
  flex: none;
}

.tabs {
  height: 48px;
  display: flex;
  padding: 5px;
  border-radius: 8px;
  background: #fff;
}

.tabs-item {
  width: 297px;
  height: 38px;
  border-radius: 8px;
  font-size: 14px;
  line-height: 38px;
  letter-spacing: 0.33px;
  text-align: center;
  color: #5a5a66;
}

.tabs-active {
  width: 296px;
  margin-right: 1px;
  background: #3d2c5e;
  color: #f2f0f7;
}

.pane {
  height: 120px;
  margin-top: 26px;
  padding: 16px;
  border-radius: 8px;
  background: #fff;
  font-size: 14px;
  line-height: 22px;
  letter-spacing: 0.3px;
  color: #5a5a5a;
}

/* dock */
.dock {
  height: 51px;
  flex: none;
  display: flex;
  align-items: center;
  padding-left: 2px;
  background: linear-gradient(90deg, #453639, #53383a);
  position: relative;
}

.dock-item {
  width: 48px;
  height: 48px;
  margin-right: 4px;
  display: flex;
  align-items: center;
  justify-content: center;
  border-radius: 3px;
  position: relative;
}

.dock-item svg {
  width: 33px;
  height: 33px;
}

.dock-item:nth-child(3)::after,
.dock-item:nth-child(5)::after,
.dock-item:nth-child(6)::after,
.dock-item:nth-child(7)::after,
.dock-item:nth-child(10)::after,
.dock-item:nth-child(11)::after {
  content: "";
  position: absolute;
  left: 22px;
  bottom: 1px;
  width: 4px;
  height: 4px;
  border-radius: 50%;
  background: #e9541e;
}

.dock-active {
  background: rgba(255, 255, 255, 0.15);
}

.dock-a {
  fill: #fff;
  font-family: "Liberation Sans", sans-serif;
  font-size: 22px;
  font-weight: 700;
  text-anchor: middle;
}

.dock-grid {
  position: absolute;
  right: 15px;
  top: 16px;
  display: grid;
  grid-template-columns: repeat(3, 4px);
  gap: 4.500px;
}

.dock-grid i {
  height: 4px;
  border-radius: 50%;
  background: #e8e4e2;
}
```
